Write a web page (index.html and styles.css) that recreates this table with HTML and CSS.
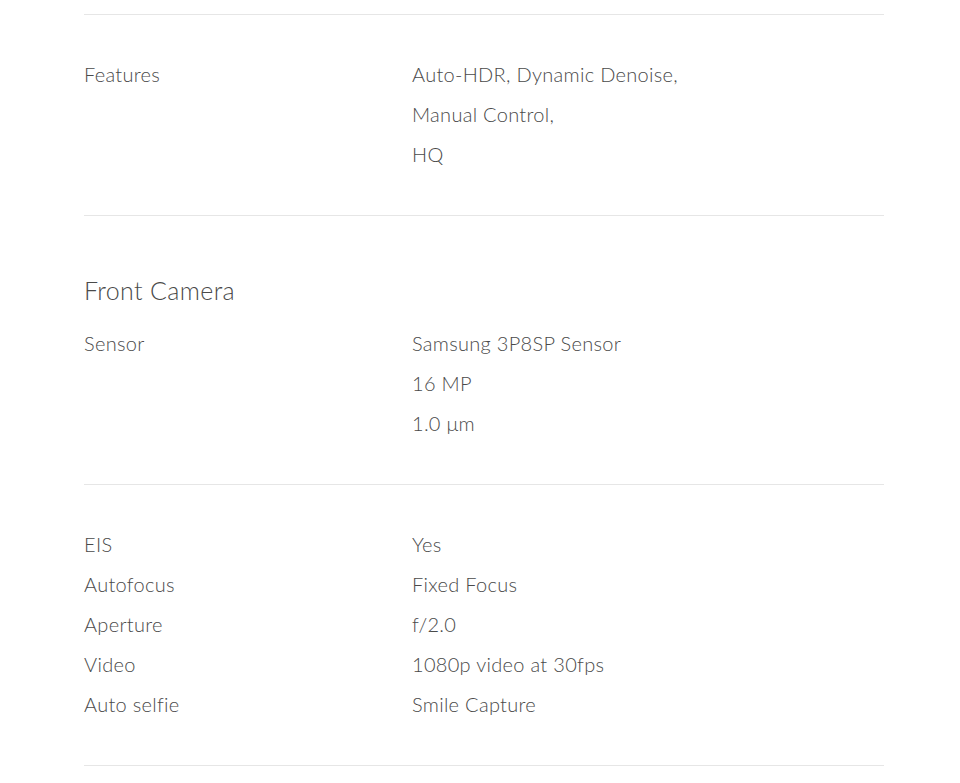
FILE: index.html
```html
<!DOCTYPE html>
<html>
<head>
<meta charset="utf-8">
<link rel="stylesheet" href="styles.css">
</head>
<body>
<div class="specs">
  <div class="group">
    <div class="row">
      <div class="label">Features</div>
      <div class="value">
        <div>Auto-HDR, Dynamic Denoise,</div>
        <div>Manual Control,</div>
        <div>HQ</div>
      </div>
    </div>
  </div>
  <div class="group">
    <h2 class="title">Front Camera</h2>
    <div class="row">
      <div class="label">Sensor</div>
      <div class="value">
        <div>Samsung 3P8SP Sensor</div>
        <div>16 MP</div>
        <div>1.0 μm</div>
      </div>
    </div>
  </div>
  <div class="group last">
    <div class="row"><div class="label">EIS</div><div class="value">Yes</div></div>
    <div class="row"><div class="label">Autofocus</div><div class="value">Fixed Focus</div></div>
    <div class="row"><div class="label">Aperture</div><div class="value">f/2.0</div></div>
    <div class="row"><div class="label">Video</div><div class="value">1080p video at 30fps</div></div>
    <div class="row"><div class="label">Auto selfie</div><div class="value">Smile Capture</div></div>
  </div>
</div>
</body>
</html>
```
FILE: styles.css
```css
html, body {
  margin: 0;
  padding: 0;
  background: #fff;
}
body {
  font-family: Lato, "Open Sans", sans-serif;
  font-weight: 300;
  color: #4a4a4a;
  font-size: 20px;
  letter-spacing: 0.3px;
  line-height: 40px;
}
.specs {
  width: 800px;
  margin: 0 0 0 84px;
  padding-top: 14px;
}
.group {
  border-top: 1px solid #e6e6e6;
  padding: 39px 0 41px;
}
.group.last {
  border-bottom: 1px solid #e6e6e6;
}
.title {
  margin: 19px 0 17px;
  font-size: 25px;
  font-weight: 300;
  letter-spacing: 0.35px;
  line-height: 32px;
  color: #4a4a4a;
}
.row {
  display: grid;
  grid-template-columns: 328px 1fr;
}
```
